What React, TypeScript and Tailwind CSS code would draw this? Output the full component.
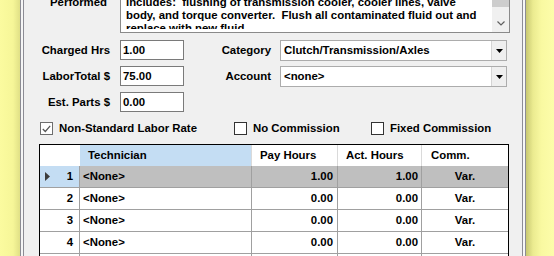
import React from "react";

type Row = {
  n: number;
  tech: string;
  pay: string;
  act: string;
  comm: string;
  selected?: boolean;
};

const rows: Row[] = [
  { n: 1, tech: "<None>", pay: "1.00", act: "1.00", comm: "Var.", selected: true },
  { n: 2, tech: "<None>", pay: "0.00", act: "0.00", comm: "Var." },
  { n: 3, tech: "<None>", pay: "0.00", act: "0.00", comm: "Var." },
  { n: 4, tech: "<None>", pay: "0.00", act: "0.00", comm: "Var." },
  { n: 5, tech: "<None>", pay: "0.00", act: "0.00", comm: "Var." },
];

function Select({ value }: { value: string }) {
  return (
    <div className="ml-[9px] flex h-[21px] w-[227px] border border-[#acacac] bg-white">
      <div className="flex-1 pl-[3px] leading-[19px]">{value}</div>
      <div className="flex w-[15px] items-center justify-center border-l border-[#d4d4d4] bg-[#efefef]">
        <svg width="7" height="4" viewBox="0 0 7 4">
          <polygon points="0,0 7,0 3.5,4" fill="#000" />
        </svg>
      </div>
    </div>
  );
}

function Field({ value }: { value: string }) {
  return (
    <div className="ml-[10px] h-[20px] w-[64px] border border-[#7a7a7a] bg-white pl-[2px] leading-[18px]">
      {value}
    </div>
  );
}

function Check({ label, checked, width }: { label: string; checked?: boolean; width: string }) {
  return (
    <div className={`flex items-center gap-[6px] ${width}`}>
      <div
        className={`flex h-[13px] w-[13px] items-center justify-center border bg-white ${
          checked ? "border-[#6e6e6e]" : "border-[#333333]"
        }`}
      >
        {checked && (
          <svg width="9" height="8" viewBox="0 0 9 8">
            <polyline points="0.8,4 3.3,6.5 8.2,0.8" fill="none" stroke="#555" strokeWidth="1.2" />
          </svg>
        )}
      </div>
      <span>{label}</span>
    </div>
  );
}

export default function App() {
  return (
    <div className="flex h-[256px] w-[554px] overflow-hidden font-['Liberation_Sans',Arial,sans-serif] text-[11.4px] font-bold leading-[13px] text-black">
      <div className="w-[20px] shrink-0 bg-[linear-gradient(to_right,#fbfb9f,#f6f698_65%,#e0e086)]" />
      <div className="w-[506px] shrink-0 border-x border-[#8c8c94] bg-[#f6f6f6] px-[2px]">
        <div className="h-full overflow-hidden border-x border-[#8c8c94] bg-[#f0f0f0]">
          {/* work performed */}
          <div className="-mt-[6px] flex">
            <div className="w-[86px] pr-[3px] pt-[2px] text-right">Performed</div>
            <div className="ml-[10px] flex h-[39px] w-[390px] border border-[#8a8a8a] bg-white">
              <div className="flex-1 pb-[3px] pl-[5px]">
                <div className="h-[34px] overflow-hidden whitespace-pre pt-[1px]">
                  <div>includes:  flushing of transmission cooler, cooler lines, valve</div>
                  <div>body, and torque converter.  Flush all contaminated fluid out and</div>
                  <div>replace with new fluid.</div>
                </div>
              </div>
              <div className="flex w-[17px] flex-col bg-[#f0f0f0]">
                <div className="h-[12px] bg-[#cdcdcd]" />
                <div className="flex-1" />
                <div className="flex h-[17px] items-center justify-center">
                  <svg width="8" height="5" viewBox="0 0 8 5">
                    <polyline points="0.5,0.5 4,4 7.5,0.5" fill="none" stroke="#606060" strokeWidth="1.2" />
                  </svg>
                </div>
              </div>
            </div>
          </div>

          {/* fields */}
          <div className="mt-[7px] flex items-start">
            <div className="w-[86px] text-right leading-[20px]">Charged Hrs</div>
            <Field value="1.00" />
            <div className="w-[87px] text-right leading-[21px]">Category</div>
            <Select value="Clutch/Transmission/Axles" />
          </div>
          <div className="mt-[5px] flex items-start">
            <div className="w-[86px] text-right leading-[20px]">LaborTotal $</div>
            <Field value="75.00" />
            <div className="w-[87px] text-right leading-[21px]">Account</div>
            <Select value="<none>" />
          </div>
          <div className="mt-[5px] flex items-start">
            <div className="w-[86px] text-right leading-[20px]">Est. Parts $</div>
            <Field value="0.00" />
          </div>

          {/* options */}
          <div className="ml-[16px] mt-[10px] flex h-[13px]">
            <Check label="Non-Standard Labor Rate" checked width="w-[194px]" />
            <Check label="No Commission" width="w-[137px]" />
            <Check label="Fixed Commission" width="w-[140px]" />
          </div>

          {/* technicians grid */}
          <div className="ml-[15px] mt-[9px] w-[470px] border border-black bg-white">
            <div className="flex h-[21px] leading-[21px]">
              <div className="w-[40px]" />
              <div className="w-[172px] border-r border-[#dadada] bg-[#c4ddf3] pl-[8px]">Technician</div>
              <div className="w-[86px] border-r border-[#dadada] pl-[8px]">Pay Hours</div>
              <div className="w-[84px] border-r border-[#dadada] pl-[8px]">Act. Hours</div>
              <div className="w-[86px] pl-[9px]">Comm.</div>
            </div>
            {rows.map((r) => (
              <div key={r.n} className="flex h-[22px] leading-[21px]">
                <div
                  className={`flex w-[40px] items-center border-b border-r border-[#a0a0a0] pl-[5px] pr-[6px] ${
                    r.selected ? "bg-[#c4ddf3]" : "bg-white"
                  }`}
                >
                  <div className="w-[6px]">
                    {r.selected && (
                      <svg width="5" height="9" viewBox="0 0 5 9">
                        <polygon points="0,0 5,4.5 0,9" fill="#3c3c3c" />
                      </svg>
                    )}
                  </div>
                  <div className="flex-1 text-right">{r.n}</div>
                </div>
                <div
                  className={`flex flex-1 border-b border-[#a0a0a0] ${
                    r.selected ? "bg-[#bfbfbf]" : "bg-white"
                  }`}
                >
                  <div className="w-[172px] border-r border-[#a0a0a0] pl-[3px]">{r.tech}</div>
                  <div className="w-[86px] border-r border-[#a0a0a0] pr-[4px] text-right">{r.pay}</div>
                  <div className="w-[84px] border-r border-[#a0a0a0] pr-[3px] text-right">{r.act}</div>
                  <div className="flex-1 text-center">{r.comm}</div>
                </div>
              </div>
            ))}
          </div>
        </div>
      </div>
      <div className="flex-1 bg-[linear-gradient(to_right,#c8c872,#ebeb90_25%,#f9f9a1_55%,#fdfdaa)]" />
    </div>
  );
}
